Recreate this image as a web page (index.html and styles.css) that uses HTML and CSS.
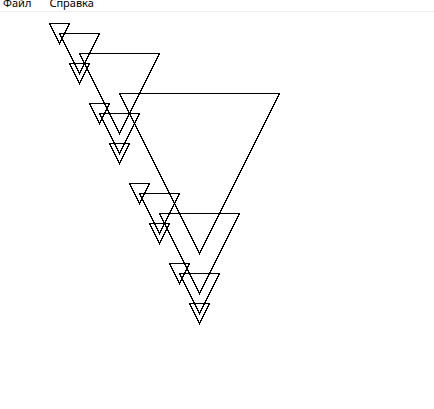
FILE: index.html
```html
<!DOCTYPE html>
<html lang="ru">
<head>
    <meta charset="UTF-8">
    <meta name="viewport" content="width=device-width, initial-scale=1.0">
    <title>Треугольники</title>
    <link rel="stylesheet" href="styles.css">
</head>
<body>
    <!-- Menu -->
    <div class="menubar">
        <span class="menu-item item-file">Файл</span>
        <span class="menu-item item-help">Справка</span>
    </div>

    <!-- Drawing area -->
    <div class="canvas">
        <svg class="drawing" width="434" height="397" viewBox="0 12 434 397">
            <g class="tri">
                <!-- level 1 -->
                <polygon points="119.5,93.5 279.5,93.5 199.5,253.5"/>
                <!-- level 2 -->
                <polygon points="79.5,53.5 159.5,53.5 119.5,133.5"/>
                <polygon points="159.5,213.5 239.5,213.5 199.5,293.5"/>
                <!-- level 3 -->
                <polygon points="59.5,33.5 99.5,33.5 79.5,73.5"/>
                <polygon points="99.5,113.5 139.5,113.5 119.5,153.5"/>
                <polygon points="139.5,193.5 179.5,193.5 159.5,233.5"/>
                <polygon points="179.5,273.5 219.5,273.5 199.5,313.5"/>
                <!-- level 4 -->
                <polygon points="49.5,23.5 69.5,23.5 59.5,43.5"/>
                <polygon points="69.5,63.5 89.5,63.5 79.5,83.5"/>
                <polygon points="89.5,103.5 109.5,103.5 99.5,123.5"/>
                <polygon points="109.5,143.5 129.5,143.5 119.5,163.5"/>
                <polygon points="129.5,183.5 149.5,183.5 139.5,203.5"/>
                <polygon points="149.5,223.5 169.5,223.5 159.5,243.5"/>
                <polygon points="169.5,263.5 189.5,263.5 179.5,283.5"/>
                <polygon points="189.5,303.5 209.5,303.5 199.5,323.5"/>
            </g>
        </svg>
    </div>
</body>
</html>
```

FILE: styles.css
```css
body {
    margin: 0;
    background-color: #fff;
    font-family: 'Noto Sans', 'Open Sans', sans-serif;
    overflow: hidden;
}

/* Menu bar */
.menubar {
    height: 11px;
    overflow: hidden;
    display: flex;
    align-items: flex-end;
    border-bottom: 1px solid #f0f0f0;
}

.menu-item {
    font-size: 11px;
    line-height: 16px;
    color: #000;
    white-space: nowrap;
}

.item-file {
    padding-left: 3px;
}

.item-help {
    margin-left: 18px;
}

/* Drawing area */
.canvas {
    height: 397px;
}

.drawing {
    display: block;
}

.tri polygon {
    fill: none;
    stroke: #000;
    stroke-width: 1;
    shape-rendering: crispEdges;
}
```
